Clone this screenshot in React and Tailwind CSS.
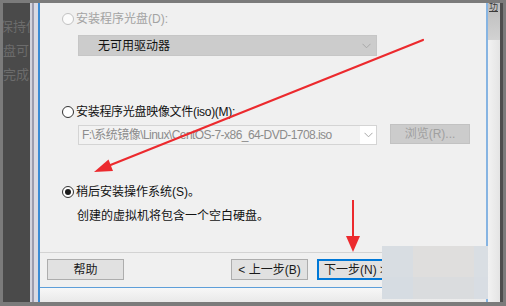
import React from 'react';

const font = { fontFamily: '"Liberation Sans", "Noto Sans CJK SC", sans-serif' };

function Radio({ checked, disabled }) {
  return (
    <span
      className={`flex h-[12px] w-[12px] shrink-0 items-center justify-center rounded-full border ${
        disabled ? 'border-[#c2c2c2] bg-[#fbfbfb]' : 'border-[#333333] bg-white'
      }`}
    >
      {checked && <span className="h-[6px] w-[6px] rounded-full bg-[#1b1b1b]" />}
    </span>
  );
}

function Chevron() {
  return (
    <svg width="9" height="6" viewBox="0 0 9 6" className="shrink-0">
      <path d="M0.5 0.8 L4.5 4.8 L8.5 0.8" fill="none" stroke="#a8a8a8" strokeWidth="1" />
    </svg>
  );
}

function Button({ children, focused }) {
  return (
    <div
      className={`flex h-[21px] w-[77px] items-center justify-center bg-[#e1e1e1] text-[12px] text-[#1a1a1a] ${
        focused ? 'border-2 border-[#0078d7]' : 'border border-[#adadad]'
      }`}
    >
      {children}
    </div>
  );
}

export default function App() {
  return (
    <div className="relative h-[306px] w-[506px] overflow-hidden bg-[#7b7b7b] px-[3px] pt-[3px] pb-[4px]" style={font}>
      <div className="flex h-full">
        {/* background window text */}
        <div className="flex w-[27px] shrink-0 flex-col overflow-hidden whitespace-nowrap bg-[#4a4a4a] text-[13px] leading-[13px] text-[#6c6c6c]">
          <span className="ml-[-3px] mt-[17px]">保持使</span>
          <span className="mt-[11px]">盘可以</span>
          <span className="mt-[11px]">完成</span>
        </div>
        <div className="w-[2px] shrink-0 bg-[#d2d2dc]" />
        <div className="w-[2px] shrink-0 bg-[#9c9cae]" />
        <div className="w-[4px] shrink-0 bg-[#d9d9e3]" />
        <div className="w-[2px] shrink-0 bg-[#3b8bd5]" />

        {/* dialog */}
        <div className="flex w-[446px] shrink-0 flex-col">
          <div className="flex h-[284px] flex-col bg-[#f0f0f0] text-[12px] leading-[16px] text-[#111111]">
            <div className="ml-[22px] mt-[8px] flex h-[16px] items-center gap-[2px]">
              <Radio disabled />
              <span className="text-[#a3a3a3]">安装程序光盘(D):</span>
            </div>
            <div className="ml-[38px] mt-[8px] flex h-[21px] w-[299px] items-center justify-between border border-[#c6c6c6] bg-[#cccccc] pl-[19px] pr-[5px]">
              <span>无可用驱动器</span>
              <Chevron />
            </div>

            <div className="ml-[22px] mt-[48px] flex h-[16px] items-center gap-[2px]">
              <Radio />
              <span className="tracking-[-0.3px]">安装程序光盘映像文件(iso)(M):</span>
            </div>
            <div className="ml-[38px] mt-[4px] flex h-[21px] items-start gap-[13px]">
              <div className="mt-[1px] flex h-[20px] w-[299px] items-center border border-[#d4d4d4] bg-white">
                <div className="flex h-full w-[281px] items-center overflow-hidden whitespace-nowrap bg-[#f2f2f2] pl-[3px] tracking-[-0.55px] text-[#8c8c8c]">
                  F:\系统镜像\Linux\CentOS-7-x86_64-DVD-1708.iso
                </div>
                <div className="flex flex-1 justify-center">
                  <Chevron />
                </div>
              </div>
              <div className="flex h-[20px] w-[80px] items-center justify-center border border-[#c2c2c2] bg-[#cccccc] text-[#a0a0a0]">
                浏览(R)...
              </div>
            </div>

            <div className="ml-[22px] mt-[39px] flex h-[16px] items-center gap-[2px]">
              <Radio checked />
              <span>稍后安装操作系统(S)。</span>
            </div>
            <div className="ml-[37px] mt-[8px] h-[16px]">创建的虚拟机将包含一个空白硬盘。</div>

            <div className="mt-auto flex h-[35px] items-start border-t border-[#d3d3d3] pt-[6px]">
              <div className="ml-[7px]">
                <Button>帮助</Button>
              </div>
              <div className="ml-[107px]">
                <Button>&lt; 上一步(B)</Button>
              </div>
              <div className="ml-[9px]">
                <Button focused>下一步(N) &gt;</Button>
              </div>
            </div>
          </div>
          <div className="h-px bg-[#5d9ed9]" />
          <div className="flex-1 bg-gradient-to-b from-[#f7f7f7] to-[#e9e9e9]" />
        </div>

        <div className="w-[2px] shrink-0 bg-[#86b4e2]" />
        <div className="flex w-[12px] shrink-0 flex-col">
          <div className="h-[37px] overflow-hidden bg-gradient-to-b from-[#bcbcbc] to-[#d2d2d2] text-[9px] leading-[9px] text-[#3a3a3a]">
            <span className="ml-[1px] underline">功</span>
          </div>
          <div className="flex-1 bg-gradient-to-r from-[#f2f2f2] to-[#e4e4e4]" />
        </div>
        <div className="w-[3px] shrink-0 bg-[#4e4e4e]" />
      </div>

      {/* blurred watermark patch */}
      <div className="absolute left-[382px] top-[246px] grid h-[53px] w-[106px] grid-cols-[31px_61px_14px] grid-rows-[31px_22px]">
        <div className="bg-[#d8dde2]" />
        <div className="bg-[#dfdedd]" />
        <div className="bg-[#d9dee3]" />
        <div className="bg-[#d6dce2]" />
        <div className="bg-[#dadcde]" />
        <div className="bg-[#d8dde3]" />
      </div>

      {/* red arrows */}
      <svg className="pointer-events-none absolute left-0 top-0" width="506" height="306" viewBox="0 0 506 306">
        <line x1="423" y1="40" x2="108" y2="166" stroke="#ec2a2e" strokeWidth="2.2" strokeLinecap="round" />
        <polygon points="94,172 113,171 108.5,159.5" fill="#ec2a2e" />
        <line x1="353" y1="200" x2="353" y2="240" stroke="#ec2a2e" strokeWidth="2" />
        <polygon points="346,236 360,236 353,252" fill="#ec2a2e" />
      </svg>
    </div>
  );
}
